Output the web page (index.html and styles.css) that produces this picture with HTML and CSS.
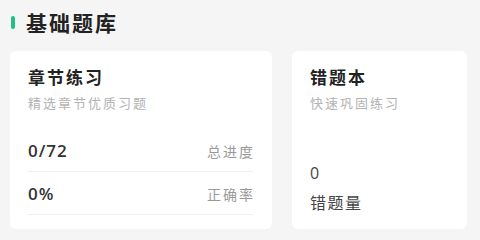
FILE: index.html
```html
<!DOCTYPE html>
<html lang="zh">
<head>
<meta charset="utf-8">
<link rel="stylesheet" href="styles.css">
</head>
<body>
<div class="page">
  <div class="section-head">
    <span class="mark"></span>
    <h2 class="section-title">基础题库</h2>
  </div>
  <div class="cards">
    <div class="card card-main">
      <div class="card-title">章节练习</div>
      <div class="card-sub">精选章节优质习题</div>
      <div class="stats">
        <div class="stat-row"><span class="num">0/72</span><span class="label">总进度</span></div>
        <div class="stat-row"><span class="num">0%</span><span class="label">正确率</span></div>
      </div>
    </div>
    <div class="card card-side">
      <div class="card-title">错题本</div>
      <div class="card-sub">快速巩固练习</div>
      <div class="wrong">
        <div class="wrong-num">0</div>
        <div class="wrong-label">错题量</div>
      </div>
    </div>
  </div>
</div>
</body>
</html>
```
FILE: styles.css
```css
* { box-sizing: border-box; margin: 0; padding: 0; }
html, body { width: 480px; height: 240px; overflow: hidden; }
body {
  background: #f5f5f5;
  font-family: "Noto Sans CJK SC", "Noto Sans", sans-serif;
  color: #222;
}
.page {
  padding: 8px 13px 0 10px;
}
.section-head {
  display: flex;
  align-items: center;
  gap: 11px;
  height: 28px;
}
.mark {
  width: 4px;
  height: 13px;
  margin-left: 1px;
  border-radius: 2px;
  background: #20c08a;
}
.section-title {
  font-size: 21px;
  font-weight: 700;
  letter-spacing: 2px;
  line-height: 28px;
  color: #222;
}
.cards {
  display: flex;
  gap: 20px;
  margin-top: 15px;
}
.card {
  background: #fff;
  border-radius: 6px;
  height: 178px;
  padding: 14px 18px 16px 18px;
}
.card-main { flex: 0 0 262px; padding-right: 19px; }
.card-side { flex: 0 0 175px; display: flex; flex-direction: column; }
.card-title {
  font-size: 17px;
  font-weight: 700;
  line-height: 24px;
  letter-spacing: 2px;
  color: #222;
}
.card-sub {
  margin-top: 4px;
  font-size: 13px;
  line-height: 20px;
  letter-spacing: 2px;
  color: #b3b3b3;
}
.stats {
  margin-top: 16px;
}
.stat-row {
  display: flex;
  justify-content: space-between;
  align-items: center;
  padding: 12px 0 10px;
  border-bottom: 1px solid #f0f0f0;
}
.num {
  font-family: "Open Sans", "Liberation Sans", sans-serif;
  font-size: 17px;
  font-weight: 600;
  line-height: 20px;
  color: #333;
  letter-spacing: 1px;
}
.label {
  font-size: 14px;
  line-height: 20px;
  letter-spacing: 2px;
  margin-right: -2px;
  color: #999;
}
.wrong {
  margin-top: auto;
  display: flex;
  flex-direction: column;
  gap: 8px;
}
.wrong-num {
  font-family: "Open Sans", "Liberation Sans", sans-serif;
  font-size: 16px;
  font-weight: 400;
  line-height: 20px;
  color: #444;
}
.wrong-label {
  font-size: 16px;
  line-height: 22px;
  letter-spacing: 1.5px;
  color: #444;
}
```
